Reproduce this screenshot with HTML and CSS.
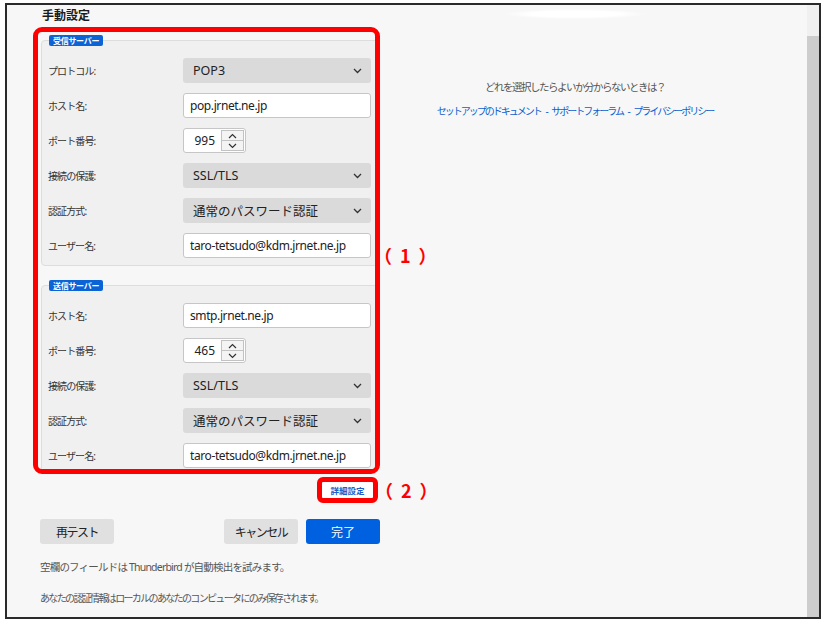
FILE: index.html
```html
<!DOCTYPE html>
<html lang="ja">
<head>
<meta charset="utf-8">
<title>手動設定</title>
<link rel="stylesheet" href="styles.css">
</head>
<body>
<div class="frame">
  <div class="main">
    <div class="left">
      <h1 class="title">手動設定</h1>
      <div class="box-row">
        <div class="hl">
          <div class="group">
            <div class="badge">受信サーバー</div>
            <div class="row"><span class="lbl">プロトコル:</span><div class="select">POP3<svg class="chev" width="9" height="6" viewBox="0 0 9 6"><path d="M1 1l3.5 3.5L8 1" fill="none" stroke="#333" stroke-width="1.3"/></svg></div></div>
            <div class="row"><span class="lbl">ホスト名:</span><div class="input">pop.jrnet.ne.jp</div></div>
            <div class="row"><span class="lbl">ポート番号:</span><div class="num"><span class="val">995</span><span class="spin"><span class="sb"><svg width="9" height="6" viewBox="0 0 9 6"><path d="M1 5l3.5-3.5L8 5" fill="none" stroke="#333" stroke-width="1.2"/></svg></span><span class="sb"><svg width="9" height="6" viewBox="0 0 9 6"><path d="M1 1l3.5 3.5L8 1" fill="none" stroke="#333" stroke-width="1.2"/></svg></span></span></div></div>
            <div class="row"><span class="lbl">接続の保護:</span><div class="select">SSL/TLS<svg class="chev" width="9" height="6" viewBox="0 0 9 6"><path d="M1 1l3.5 3.5L8 1" fill="none" stroke="#333" stroke-width="1.3"/></svg></div></div>
            <div class="row"><span class="lbl">認証方式:</span><div class="select">通常のパスワード認証<svg class="chev" width="9" height="6" viewBox="0 0 9 6"><path d="M1 1l3.5 3.5L8 1" fill="none" stroke="#333" stroke-width="1.3"/></svg></div></div>
            <div class="row"><span class="lbl">ユーザー名:</span><div class="input">taro-tetsudo@kdm.jrnet.ne.jp</div></div>
          </div>
          <div class="group group2">
            <div class="badge">送信サーバー</div>
            <div class="row"><span class="lbl">ホスト名:</span><div class="input">smtp.jrnet.ne.jp</div></div>
            <div class="row"><span class="lbl">ポート番号:</span><div class="num"><span class="val">465</span><span class="spin"><span class="sb"><svg width="9" height="6" viewBox="0 0 9 6"><path d="M1 5l3.5-3.5L8 5" fill="none" stroke="#333" stroke-width="1.2"/></svg></span><span class="sb"><svg width="9" height="6" viewBox="0 0 9 6"><path d="M1 1l3.5 3.5L8 1" fill="none" stroke="#333" stroke-width="1.2"/></svg></span></span></div></div>
            <div class="row"><span class="lbl">接続の保護:</span><div class="select">SSL/TLS<svg class="chev" width="9" height="6" viewBox="0 0 9 6"><path d="M1 1l3.5 3.5L8 1" fill="none" stroke="#333" stroke-width="1.3"/></svg></div></div>
            <div class="row"><span class="lbl">認証方式:</span><div class="select">通常のパスワード認証<svg class="chev" width="9" height="6" viewBox="0 0 9 6"><path d="M1 1l3.5 3.5L8 1" fill="none" stroke="#333" stroke-width="1.3"/></svg></div></div>
            <div class="row"><span class="lbl">ユーザー名:</span><div class="input">taro-tetsudo@kdm.jrnet.ne.jp</div></div>
          </div>
        </div>
        <span class="mark mark1">（1）</span>
      </div>
      <div class="adv-row">
        <div class="hl-small"><span class="adv">詳細設定</span></div>
        <span class="mark">（2）</span>
      </div>
      <div class="actions">
        <span class="btn">再テスト</span>
        <span class="right-btns"><span class="btn">キャンセル</span><span class="btn primary">完了</span></span>
      </div>
      <p class="note note1">空欄のフィールドは Thunderbird が自動検出を試みます。</p>
      <p class="note note2">あなたの認証情報はローカルのあなたのコンピュータにのみ保存されます。</p>
    </div>
    <div class="side">
      <div class="glow"></div>
      <p class="q">どれを選択したらよいか分からないときは？</p>
      <p class="links"><span class="lnk">セットアップのドキュメント</span><span class="sep"> - </span><span class="lnk">サポートフォーラム</span><span class="sep"> - </span><span class="lnk">プライバシーポリシー</span></p>
    </div>
  </div>
  <div class="scroll"><div class="thumb"></div></div>
</div>
</body>
</html>
```

FILE: styles.css
```css
html, body { margin: 0; }
body {
  background: #fff;
  padding: 3px 0 0 5px;
  font-family: "Noto Sans", "Noto Sans CJK JP", sans-serif;
  color: #222;
}
.frame {
  width: 812px;
  height: 612px;
  border: 2px solid #2a2a2a;
  background: #f7f7f7;
  display: flex;
}
.main { flex: 1; display: flex; }
.left { width: 399px; flex-shrink: 0; padding-left: 26px; }
.title {
  margin: 3px 0 0 9px;
  font-size: 12px;
  font-weight: bold;
  line-height: 16px;
  color: #1a1a1a;
}
.box-row { display: flex; margin-top: 3px; }
.hl {
  flex-shrink: 0;
  width: 347px;
  height: 447px;
  box-sizing: border-box;
  border: 5px solid #ff0000;
  border-radius: 9px;
  overflow: hidden;
  padding: 8px 0 0 3px;
}
.group {
  width: 345px;
  box-sizing: border-box;
  border: 1px solid #dddddd;
  border-radius: 4px;
  background: #f0f0f0;
  padding: 0 0 7px 6px;
}
.group2 { margin-top: 19px; }
.badge {
  display: block;
  width: max-content;
  margin: -6px 0 0 1px;
  height: 11px;
  line-height: 11px;
  padding: 0 4px;
  background: #0b63d6;
  color: #fff;
  font-size: 8px;
  font-weight: bold;
  letter-spacing: -0.3px;
  border-radius: 2px;
}
.row {
  display: flex;
  align-items: center;
  height: 25px;
  margin-top: 10px;
}
.badge + .row { margin-top: 12px; }
.lbl {
  width: 135px;
  flex-shrink: 0;
  font-size: 10px;
  letter-spacing: -0.9px;
  color: #333;
}
.select, .input, .num {
  box-sizing: border-box;
  height: 25px;
  border-radius: 3px;
  display: flex;
  align-items: center;
  flex-shrink: 0;
  color: #222;
}
.select {
  width: 188px;
  background: #dadada;
  padding: 0 9px 0 10px;
  justify-content: space-between;
  font-size: 12.5px;
}
.input {
  width: 188px;
  background: #fff;
  border: 1px solid #c6c6c6;
  padding-left: 6px;
  font-size: 12px;
  letter-spacing: -0.4px;
}
.num {
  width: 63px;
  background: #fff;
  border: 1px solid #c6c6c6;
  padding: 1px 1px 1px 0;
  font-size: 12px;
}
.val { flex: 1; text-align: right; padding-right: 6px; }
.spin {
  width: 23px;
  height: 21px;
  display: flex;
  flex-direction: column;
}
.sb {
  flex: 1;
  border: 1px solid #c2c2c2;
  background: #f4f4f4;
  display: flex;
  align-items: center;
  justify-content: center;
}
.sb + .sb { border-top: none; }
.mark {
  flex-shrink: 0;
  color: #ff0000;
  font-family: "Noto Sans CJK JP", sans-serif;
  font-weight: bold;
  font-size: 18px;
  letter-spacing: 8px;
  margin-left: -6px;
  line-height: 20px;
  white-space: nowrap;
}
.mark1 { align-self: center; margin-top: 9px; }
.adv-row {
  display: flex;
  align-items: center;
  margin: 3px 0 0 284px;
}
.hl-small {
  width: 61px;
  height: 26px;
  box-sizing: border-box;
  border: 5px solid #ff0000;
  border-radius: 6px;
  background: #fff;
  display: flex;
  align-items: center;
  justify-content: center;
  flex-shrink: 0;
}
.adv-row .mark { margin-left: -3px; }
.adv {
  font-size: 8.5px;
  font-weight: bold;
  color: #1b5fc8;
}
.actions {
  display: flex;
  justify-content: space-between;
  width: 340px;
  margin: 16px 0 0 7px;
}
.right-btns { display: flex; gap: 8px; }
.btn {
  width: 74px;
  height: 25px;
  border-radius: 3px;
  background: #e0e0e0;
  font-size: 12px;
  letter-spacing: -1.5px;
  display: flex;
  align-items: center;
  justify-content: center;
  color: #222;
}
.btn.primary { background: #0061e0; color: #fff; letter-spacing: 0; }
.note {
  margin: 15px 0 0 7px;
  font-size: 10.5px;
  line-height: 16px;
  color: #555;
  white-space: nowrap;
}
.note1 { letter-spacing: -0.8px; }
.note2 { font-size: 10px; letter-spacing: -1.65px; }
.side { width: 286px; text-align: center; }
.glow {
  width: 140px;
  height: 10px;
  margin: 4px auto 0;
  background: radial-gradient(ellipse at center, #ffffff 45%, rgba(255,255,255,0) 72%);
}
.q {
  margin: 60px 0 0;
  font-size: 10.5px;
  letter-spacing: -1.5px;
  line-height: 16px;
  color: #555;
}
.links {
  margin: 8px 0 0;
  font-size: 10px;
  line-height: 16px;
  color: #0b5fd0;
  white-space: nowrap;
}
.lnk { letter-spacing: -2px; }
.sep { letter-spacing: 0; white-space: pre; padding-left: 2px; }
.scroll {
  width: 12px;
  background: #f0f0f0;
  display: flex;
  flex-direction: column;
  padding-top: 31px;
}
.thumb { flex: 1; background: #cdcdcd; }
```
